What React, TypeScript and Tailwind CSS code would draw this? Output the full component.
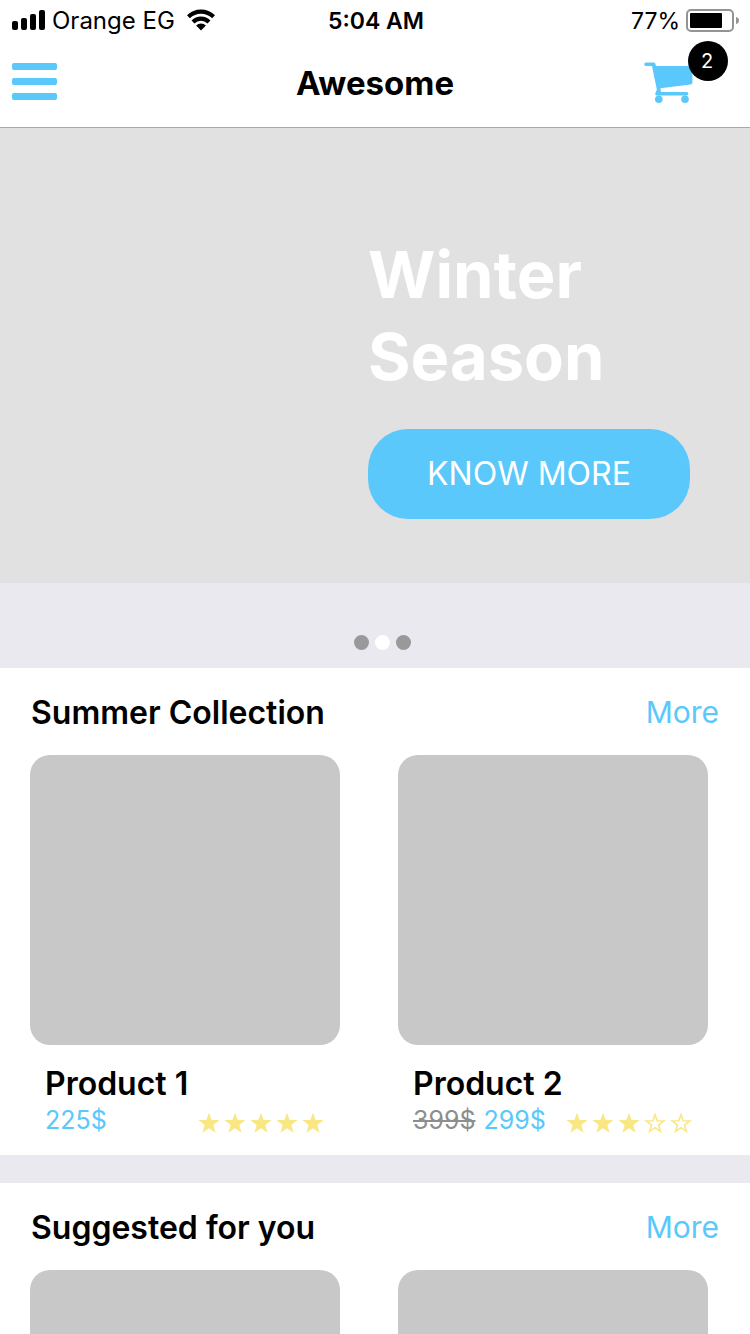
import React from "react";

type Product = {
  id: number;
  details?: {
    name: string;
    price: string;
    oldPrice?: string;
    rating: number;
  };
};

const summer: Product[] = [
  { id: 1, details: { name: "Product 1", price: "225$", rating: 5 } },
  { id: 2, details: { name: "Product 2", price: "299$", oldPrice: "399$", rating: 3 } },
];

const suggested: Product[] = [{ id: 3 }, { id: 4 }];

function SignalIcon() {
  return (
    <svg className="h-6 w-9" viewBox="0 0 36 24" aria-hidden="true">
      <rect x="0" y="13" width="6" height="9" rx="2" />
      <rect x="9" y="10" width="6" height="12" rx="2" />
      <rect x="18" y="6" width="6" height="16" rx="2" />
      <rect x="27" y="2" width="6" height="20" rx="2" />
    </svg>
  );
}

function WifiIcon() {
  return (
    <svg className="h-6 w-7" viewBox="0 0 28 24" aria-hidden="true">
      <g fill="none" stroke="#000" strokeWidth="4.2">
        <path d="M1.4 8.8 A18 18 0 0 1 26.6 8.8" />
        <path d="M6 14 A11.4 11.4 0 0 1 22 14" />
      </g>
      <path d="M9.1 17.4 A7 7 0 0 1 18.9 17.4 L14 22.4 Z" />
    </svg>
  );
}

function BatteryIcon() {
  return (
    <svg className="h-6 w-[54px]" viewBox="0 0 54 24" aria-hidden="true">
      <rect x="1" y="2" width="46" height="21" rx="4" fill="none" stroke="#949494" strokeWidth="2" />
      <rect x="4" y="5" width="32" height="15" rx="1" />
      <path d="M50 9 Q53 9.5 53 12.5 Q53 15.5 50 16 Z" fill="#949494" />
    </svg>
  );
}

function CartIcon() {
  return (
    <svg className="h-[42px] w-[50px]" viewBox="0 0 50 42" fill="#5ac8fa" aria-hidden="true">
      <path d="M2 1.4 H9.6 Q11 1.4 11.4 2.7 L11.9 5.1 H46 Q48.4 5.1 48.4 7.2 V21.6 Q48.4 23.4 46.6 23.6 L16.4 27.3 L17 31 H42.6 Q44.4 31 44.4 32.8 Q44.4 34.6 42.6 34.6 H12.8 Q11.2 34.6 11.2 33 Q11.2 32 12.9 28.8 L8 5.1 H2 Q.2 5.1 .2 3.3 Q.2 1.4 2 1.4 Z" />
      <circle cx="14.8" cy="38.2" r="3.8" />
      <circle cx="41" cy="38.2" r="3.8" />
    </svg>
  );
}

function Star({ filled }: { filled: boolean }) {
  return (
    <svg
      className="h-5 w-[22px]"
      viewBox="0 0 22 20"
      fill={filled ? "#f9e784" : "none"}
      stroke="#f9e784"
      strokeWidth={filled ? 0 : 1.6}
      aria-hidden="true"
    >
      {filled ? (
        <path d="M11 -.4 L13.6 6.9 L21.6 7.1 L15.3 12 L17.5 19.8 L11 15.3 L4.5 19.8 L6.7 12 L.4 7.1 L8.4 6.9 Z" />
      ) : (
        <path d="M11 1.6 L13.1 7.8 L19.8 7.9 L14.5 12 L16.4 18.3 L11 14.6 L5.6 18.3 L7.5 12 L2.2 7.9 L8.9 7.8 Z" />
      )}
    </svg>
  );
}

function StatusBar() {
  return (
    <div className="flex h-10 shrink-0 items-center justify-between pr-2.5 pl-3 text-[23px]">
      <div className="flex flex-1 items-center text-2xl">
        <SignalIcon />
        <span className="ml-1 pt-0.5">Orange EG</span>
        <span className="ml-3">
          <WifiIcon />
        </span>
      </div>
      <div className="pt-0.5 font-semibold">5:04 AM</div>
      <div className="flex flex-1 items-center justify-end gap-1.5">
        <span className="pt-0.5">77%</span>
        <BatteryIcon />
      </div>
    </div>
  );
}

function NavBar() {
  return (
    <header className="grid h-22 shrink-0 grid-cols-3 items-center border-b border-[#a9a9a9] px-3">
      <button type="button" aria-label="Menu" className="flex w-[45px] flex-col gap-2 pb-1">
        <span className="h-[7px] rounded-xs bg-[#5ac8fa]" />
        <span className="h-[7px] rounded-xs bg-[#5ac8fa]" />
        <span className="h-[7px] rounded-xs bg-[#5ac8fa]" />
      </button>
      <h1 className="text-center text-[33px] font-bold">Awesome</h1>
      <button type="button" aria-label="Cart, 2 items" className="relative w-[94px] justify-self-end pb-1">
        <CartIcon />
        <span className="absolute -top-5 right-2.5 flex size-10 items-center justify-center rounded-full bg-black pr-0.5 text-xl text-white">
          2
        </span>
      </button>
    </header>
  );
}

function Hero() {
  return (
    <section>
      <div className="flex justify-end bg-[#e1e1e1] px-[60px] pt-[106px] pb-16">
        <div className="w-[322px]">
          <h2 className="text-[65px] leading-[82px] font-bold text-white">
            Winter
            <br />
            Season
          </h2>
          <button
            type="button"
            className="mt-[31px] h-[90px] w-full rounded-[40px] bg-[#5ac8fa] text-[32px] text-white"
          >
            KNOW MORE
          </button>
        </div>
      </div>
      <div className="flex h-[85px] items-end justify-center gap-1.5 pb-[18px] pl-3.5">
        <span className="size-[15px] rounded-full bg-[#999]" />
        <span className="size-[15px] rounded-full bg-white" />
        <span className="size-[15px] rounded-full bg-[#999]" />
      </div>
    </section>
  );
}

function ProductCard({ product }: { product: Product }) {
  const { details } = product;
  return (
    <article className="w-[310px] shrink-0">
      <div className="h-[290px] rounded-[20px] bg-[#c8c8c8]" />
      {details && (
        <div className="pt-5 pr-4 pb-[18px] pl-[15px]">
          <h3 className="text-[32px] leading-[38px] font-semibold">{details.name}</h3>
          <div className="flex h-[34px] items-center justify-between">
            <div className="flex gap-2 text-[25px] leading-[34px]">
              {details.oldPrice && <s className="text-[#8e8e8e]">{details.oldPrice}</s>}
              <span className="text-[#5ac8fa]">{details.price}</span>
            </div>
            <div className="flex gap-1 pt-1.5" role="img" aria-label={`${details.rating} of 5 stars`}>
              {[1, 2, 3, 4, 5].map((n) => (
                <Star key={n} filled={n <= details.rating} />
              ))}
            </div>
          </div>
        </div>
      )}
    </article>
  );
}

function Collection({ title, products }: { title: string; products: Product[] }) {
  return (
    <section className="bg-white">
      <div className="flex h-[87px] items-center justify-between px-[31px] pt-0.5">
        <h2 className="text-[32px] font-semibold">{title}</h2>
        <a href="#more" className="text-[30px] text-[#5ac8fa]">
          More
        </a>
      </div>
      <div className="flex gap-[58px] overflow-x-auto px-[30px] [scrollbar-width:none]">
        {products.map((p) => (
          <ProductCard key={p.id} product={p} />
        ))}
      </div>
    </section>
  );
}

export default function App() {
  return (
    <div className="flex h-screen flex-col bg-white font-['Inter',sans-serif] text-black">
      <StatusBar />
      <NavBar />
      <main className="flex-1 overflow-y-auto bg-[#e9e9ef] [scrollbar-width:none]">
        <Hero />
        <div className="flex flex-col gap-7">
          <Collection title="Summer Collection" products={summer} />
          <Collection title="Suggested for you" products={suggested} />
        </div>
      </main>
    </div>
  );
}
